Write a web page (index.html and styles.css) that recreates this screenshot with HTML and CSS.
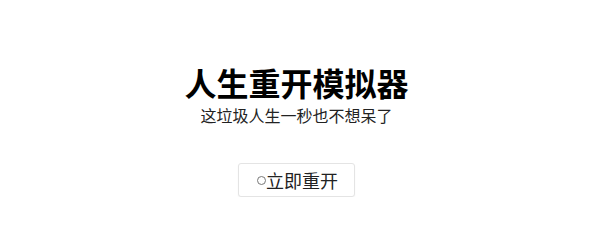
FILE: index.html
```html
<!DOCTYPE html>
<html lang="zh-CN">
<head>
<meta charset="utf-8">
<title>人生重开模拟器</title>
<link rel="stylesheet" href="styles.css">
</head>
<body>
<main class="home">
  <h1 class="title">人生重开模拟器</h1>
  <p class="subtitle">这垃圾人生一秒也不想呆了</p>
  <button class="restart"><span class="ring"></span>立即重开</button>
</main>
</body>
</html>
```
FILE: styles.css
```css
html, body {
  margin: 0;
  padding: 0;
  background: #ffffff;
}
body {
  font-family: "Noto Sans CJK SC", "Noto Sans", sans-serif;
  color: #111;
}
.home {
  display: flex;
  flex-direction: column;
  align-items: center;
  padding-top: 62px;
  padding-right: 7px;
}
.title {
  margin: 0;
  font-size: 32px;
  line-height: 40px;
  font-weight: 700;
  color: #000;
}
.subtitle {
  margin: 3px 0 0;
  font-size: 16px;
  line-height: 20px;
  color: #222;
}
.restart {
  margin-top: 38px;
  display: flex;
  align-items: center;
  box-sizing: border-box;
  width: 117px;
  height: 34px;
  padding: 0 0 0 18px;
  background: #fff;
  border: 1px solid #e4e4e4;
  border-radius: 3px;
  box-shadow: 0 1px 2px rgba(0,0,0,0.04);
  font-family: "Noto Sans CJK SC", sans-serif;
  font-size: 18px;
  color: #222;
}
.ring {
  display: inline-block;
  box-sizing: border-box;
  width: 9px;
  height: 9px;
  border: 1px solid #777;
  border-radius: 50%;
}
```
